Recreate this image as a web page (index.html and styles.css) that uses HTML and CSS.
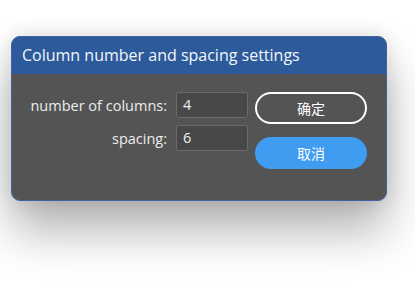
FILE: index.html
```html
<!DOCTYPE html>
<html>
<head>
<meta charset="utf-8">
<link rel="stylesheet" href="styles.css">
</head>
<body>
<div class="dialog">
  <div class="header">Column number and spacing settings</div>
  <div class="content">
    <div class="fields">
      <div class="row"><span class="label">number of columns:</span><div class="input">4</div></div>
      <div class="row"><span class="label">spacing:</span><div class="input">6</div></div>
    </div>
    <div class="buttons">
      <div class="btn ok">确定</div>
      <div class="btn cancel">取消</div>
    </div>
  </div>
</div>
</body>
</html>
```
FILE: styles.css
```css
html, body { margin: 0; padding: 0; }
body {
  background: #ffffff;
  width: 415px;
  height: 284px;
  overflow: hidden;
  font-family: "Open Sans", "Noto Sans CJK SC", sans-serif;
  padding: 36px 0 0 11px;
  box-sizing: border-box;
}
.dialog {
  width: 376px;
  height: 165px;
  background: #545454;
  border: 1px solid #3f63a0;
  border-radius: 9px;
  box-sizing: border-box;
  overflow: hidden;
  box-shadow: 0 30px 48px rgba(0,0,0,0.3), 0 0 20px rgba(0,0,0,0.12);
}
.header {
  background: #2c5a9b;
  color: #f4f6fa;
  height: 37px;
  font-size: 16px;
  line-height: 37px;
  padding-left: 10px;
}
.content {
  display: flex;
  padding: 18px 0 0 0;
}
.fields {
  display: flex;
  flex-direction: column;
  gap: 7px;
  width: 236px;
}
.row {
  display: flex;
  justify-content: flex-end;
  align-items: center;
  gap: 9px;
}
.label {
  color: #ececec;
  font-size: 14.5px;
}
.input {
  width: 64px;
  height: 24px;
  border: 1px solid #6b6b6b;
  background: #484848;
  border-radius: 2px;
  color: #f0f0f0;
  font-size: 14.5px;
  line-height: 24px;
  padding-left: 6px;
  box-sizing: content-box;
}
.buttons {
  display: flex;
  flex-direction: column;
  gap: 13px;
  margin-left: 7px;
}
.btn {
  width: 112px;
  height: 32px;
  box-sizing: border-box;
  border-radius: 16px;
  color: #ffffff;
  font-size: 14px;
  display: flex;
  align-items: center;
  justify-content: center;
  font-family: "Noto Sans CJK SC", sans-serif;
}
.ok {
  border: 2px solid #ffffff;
}
.cancel {
  background: #3f9cf0;
}
```
